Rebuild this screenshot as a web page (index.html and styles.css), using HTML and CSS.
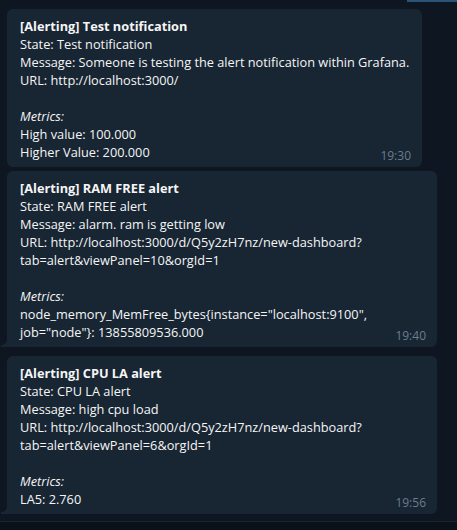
FILE: index.html
```html
<!DOCTYPE html>
<html>
<head>
<meta charset="utf-8">
<link rel="stylesheet" href="styles.css">
</head>
<body>
<div class="chat">
  <div class="prev"></div>
  <div class="bubble first">
    <div class="text"><b>[Alerting] Test notification</b><br>State: Test notification<br>Message: Someone is testing the alert notification within Grafana.<br>URL: http://localhost:3000/<br><br><i>Metrics:</i><br>High value: 100.000<br>Higher Value: 200.000</div>
    <span class="time">19:30</span>
  </div>
  <div class="bubble wide tail">
    <div class="text"><b>[Alerting] RAM FREE alert</b><br>State: RAM FREE alert<br>Message: alarm. ram is getting low<br>URL: http://localhost:3000/d/Q5y2zH7nz/new-dashboard?<br>tab=alert&amp;viewPanel=10&amp;orgId=1<br><br><i>Metrics:</i><br>node_memory_MemFree_bytes{instance="localhost:9100",<br>job="node"}: 13855809536.000</div>
    <span class="time">19:40</span>
  </div>
  <div class="bubble wide tail group">
    <div class="text"><b>[Alerting] CPU LA alert</b><br>State: CPU LA alert<br>Message: high cpu load<br>URL: http://localhost:3000/d/Q5y2zH7nz/new-dashboard?<br>tab=alert&amp;viewPanel=6&amp;orgId=1<br><br><i>Metrics:</i><br>LA5: 2.760</div>
    <span class="time">19:56</span>
  </div>
</div>
<div class="footer"></div>
</body>
</html>
```
FILE: styles.css
```css
html, body {
  margin: 0;
  padding: 0;
  background: #0e1621;
  height: 530px;
  overflow: hidden;
}
body {
  display: flex;
  flex-direction: column;
  font-family: "Open Sans", "Noto Sans", sans-serif;
  font-size: 12.75px;
  color: #f5f5f5;
}
.chat {
  flex: 1;
  display: flex;
  flex-direction: column;
  align-items: flex-start;
  padding-left: 7px;
}
.prev {
  align-self: flex-end;
  width: 50px;
  height: 2px;
  background: #2b5278;
  margin-bottom: 7px;
}
.bubble {
  position: relative;
  background: #182533;
  border-radius: 6px;
  padding: 8px 13px 6px 13px;
  margin-bottom: 4px;
}
.bubble.first {
  width: 389px;
}
.bubble.wide {
  width: 404px;
}
.bubble.group {
  margin-top: 5px;
}
.bubble.tail {
  border-bottom-left-radius: 0;
}
.bubble.tail::before {
  content: "";
  position: absolute;
  left: -6px;
  bottom: 0;
  width: 6px;
  height: 8px;
  background: radial-gradient(circle at 0 0, transparent 6px, #182533 6.5px);
}
.text {
  line-height: 18px;
  white-space: nowrap;
}
.text b {
  font-weight: 700;
}
.time {
  position: absolute;
  right: 11px;
  bottom: 3px;
  font-size: 12px;
  color: #6b7d8e;
  line-height: 16px;
}
.footer {
  height: 8px;
  border-top: 1px solid #1a2430;
  background: #0b1119;
}
```
